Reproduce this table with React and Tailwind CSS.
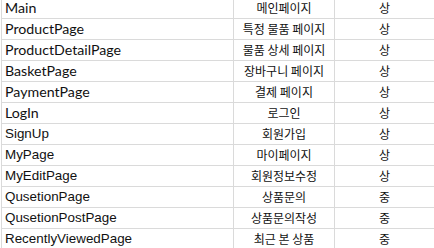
export default function App() {
  const rows = [
    ["Main", "메인페이지", "상", "a"],
    ["ProductPage", "특정 물품 페이지", "상", "a"],
    ["ProductDetailPage", "물품 상세 페이지", "상", "a"],
    ["BasketPage", "장바구니 페이지", "상", "a"],
    ["PaymentPage", "결제 페이지", "상", "a"],
    ["LogIn", "로그인", "상", "a"],
    ["SignUp", "회원가입", "상", "b"],
    ["MyPage", "마이페이지", "상", "b"],
    ["MyEditPage", "회원정보수정", "상", "b"],
    ["QusetionPage", "상품문의", "중", "b"],
    ["QusetionPostPage", "상품문의작성", "중", "b"],
    ["RecentlyViewedPage", "최근 본 상품", "중", "b"],
  ];
  return (
    <div className="w-[434px] h-[248px] overflow-hidden bg-white text-[#111]">
      <div className="-mt-[3px] ml-[1px] border-l border-t border-[#dadada]">
        {rows.map(([a, b, c, f]) => (
          <div key={a} className="flex h-[21px] border-b border-[#dadada]">
            <div
              className={
                "w-[232px] border-r border-[#dadada] pl-[3px] flex items-center leading-none " +
                (f === "a"
                  ? "font-['Lato',sans-serif] text-[14.2px]"
                  : "font-['Liberation_Sans',sans-serif] text-[13.4px]")
              }
            >
              {a}
            </div>
            <div className="w-[101px] border-r border-[#dadada] flex items-center justify-center text-[12px] leading-none font-['Noto_Sans_CJK_KR',sans-serif]">
              {b}
            </div>
            <div className="flex-1 flex items-center justify-center text-[12px] leading-none font-['Noto_Sans_CJK_KR',sans-serif]">
              {c}
            </div>
          </div>
        ))}
      </div>
    </div>
  );
}
